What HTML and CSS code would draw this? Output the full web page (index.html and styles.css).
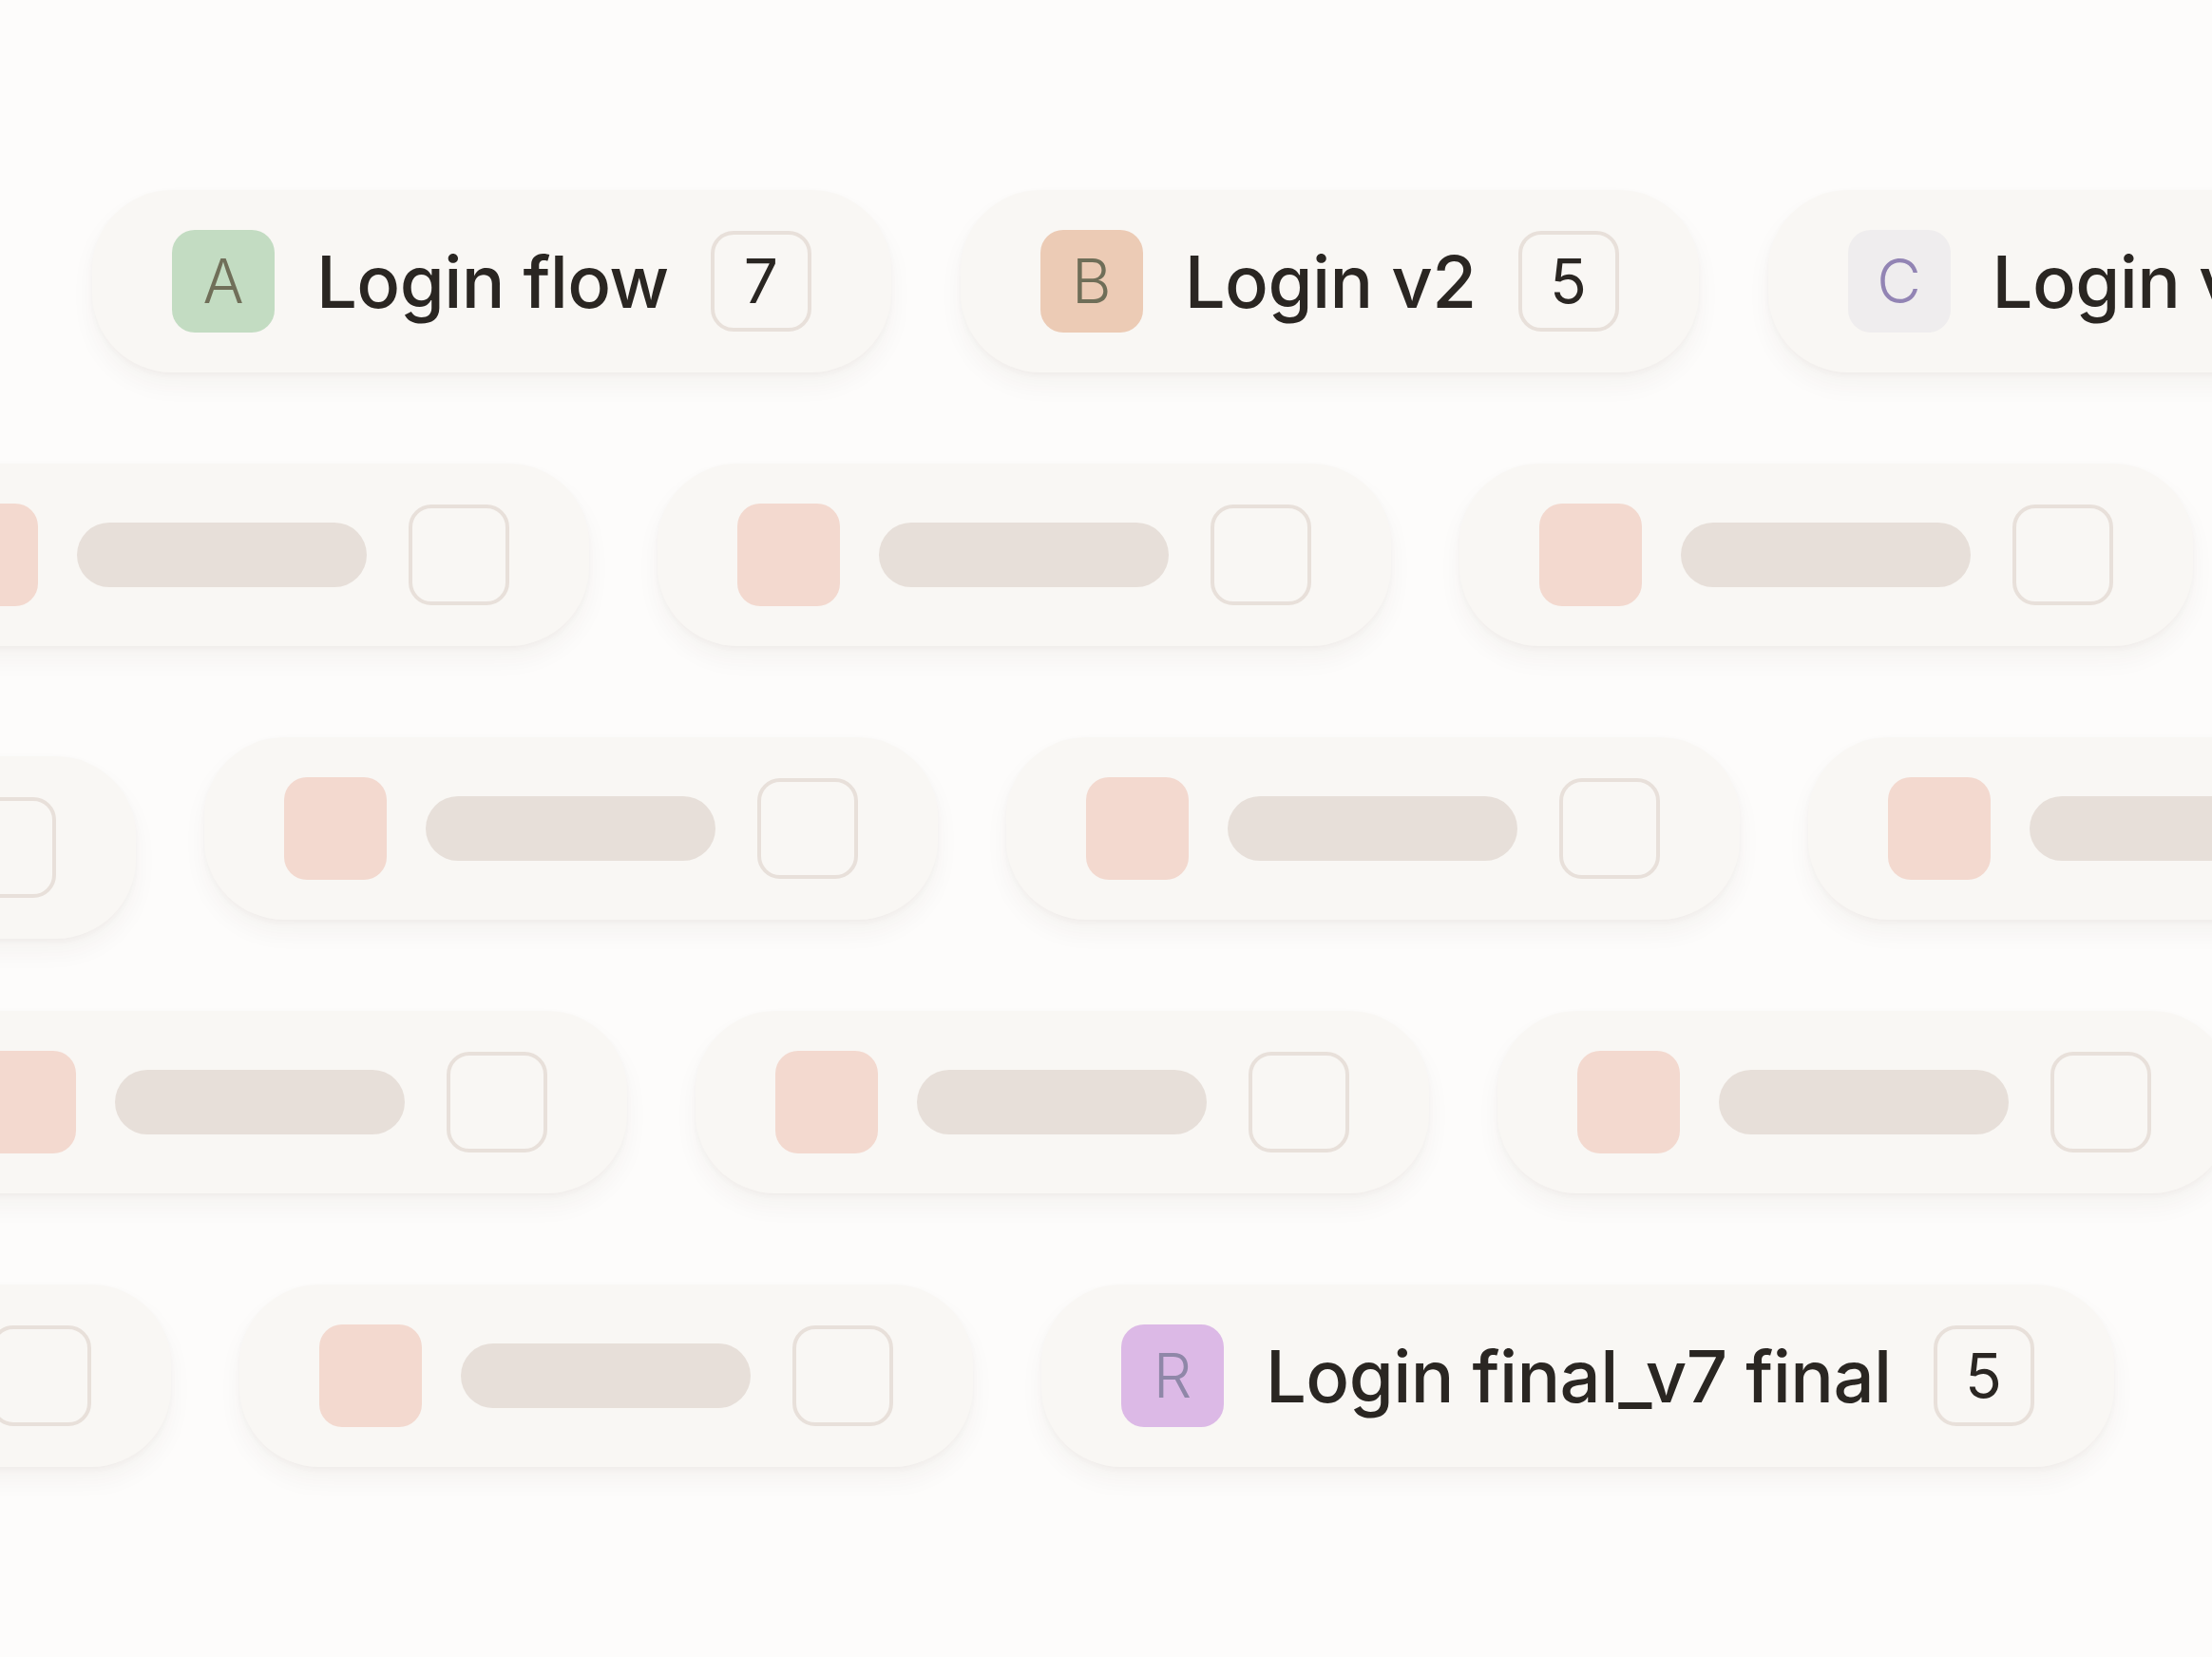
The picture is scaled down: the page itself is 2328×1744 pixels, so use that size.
FILE: index.html
```html
<!DOCTYPE html>
<html lang="en">
<head>
<meta charset="utf-8">
<title>Versions</title>
<link rel="stylesheet" href="styles.css">
</head>
<body>
<div class="canvas">
  <div class="row row-1">
    <div class="pill"><span class="avatar av-a">A</span><span class="label">Login flow</span><span class="count">7</span></div>
    <div class="pill"><span class="avatar av-b">B</span><span class="label">Login v2</span><span class="count">5</span></div>
    <div class="pill"><span class="avatar av-c">C</span><span class="label">Login v3</span><span class="count">4</span></div>
  </div>
  <div class="row row-2">
    <div class="pill"><span class="avatar sk"></span><span class="bar"></span><span class="count"></span></div>
    <div class="pill"><span class="avatar sk"></span><span class="bar"></span><span class="count"></span></div>
    <div class="pill"><span class="avatar sk"></span><span class="bar"></span><span class="count"></span></div>
    <div class="pill"><span class="avatar sk"></span><span class="bar"></span><span class="count"></span></div>
  </div>
  <div class="row row-3">
    <div class="pill drift"><span class="avatar sk"></span><span class="bar"></span><span class="count"></span></div>
    <div class="pill"><span class="avatar sk"></span><span class="bar"></span><span class="count"></span></div>
    <div class="pill"><span class="avatar sk"></span><span class="bar"></span><span class="count"></span></div>
    <div class="pill"><span class="avatar sk"></span><span class="bar"></span><span class="count"></span></div>
  </div>
  <div class="row row-4">
    <div class="pill"><span class="avatar sk"></span><span class="bar"></span><span class="count"></span></div>
    <div class="pill"><span class="avatar sk"></span><span class="bar"></span><span class="count"></span></div>
    <div class="pill"><span class="avatar sk"></span><span class="bar"></span><span class="count"></span></div>
    <div class="pill"><span class="avatar sk"></span><span class="bar"></span><span class="count"></span></div>
  </div>
  <div class="row row-5">
    <div class="pill"><span class="avatar sk"></span><span class="bar"></span><span class="count"></span></div>
    <div class="pill"><span class="avatar sk"></span><span class="bar"></span><span class="count"></span></div>
    <div class="pill"><span class="avatar av-r">R</span><span class="label">Login final_v7 final</span><span class="count">5</span></div>
  </div>
</div>
</body>
</html>
```

FILE: styles.css
```css
html, body {
  margin: 0;
  padding: 0;
  background: #fdfcfb;
}

.canvas {
  width: 2328px;
  height: 1744px;
  overflow: hidden;
  background: #fdfcfb;
  padding-top: 200px;
  box-sizing: border-box;
  display: flex;
  flex-direction: column;
  gap: 96px;
  font-family: Inter, "Noto Sans", sans-serif;
}

.row {
  display: flex;
  gap: 72px;
  align-items: flex-start;
}

.row-1 { margin-left: 97px; gap: 73px; }
.row-2 { margin-left: -152px; }
.row-3 { margin-left: -629px; }
.row-4 { margin-left: -112px; }
.row-5 { margin-left: -592px; }

.pill {
  flex-shrink: 0;
  height: 192px;
  box-sizing: border-box;
  padding: 0 84px;
  display: flex;
  align-items: center;
  gap: 44px;
  background: #f9f7f4;
  border-radius: 84px;
  box-shadow: 0 14px 26px rgba(60, 40, 30, 0.045), 0 3px 6px rgba(60, 40, 30, 0.03);
}

.drift {
  margin-top: 20px;
  margin-bottom: -20px;
}

.avatar {
  flex-shrink: 0;
  width: 108px;
  height: 108px;
  border-radius: 24px;
  display: flex;
  align-items: center;
  justify-content: center;
  font-size: 64px;
  font-weight: 300;
  line-height: 1;
}

.av-a { background: #c3dcc2; color: #706f59; }
.av-b { background: #eccbb5; color: #6f6e58; }
.av-c { background: #efedee; color: #9284b4; }
.av-r { background: #dcb9e6; color: #8f87a8; }
.sk { background: #f3d9cf; }

.label {
  font-size: 76px;
  font-weight: 500;
  color: #2a2622;
  white-space: nowrap;
  line-height: 1;
  letter-spacing: -0.6px;
}

.bar {
  flex-shrink: 0;
  width: 305px;
  height: 68px;
  margin-left: -3px;
  border-radius: 34px;
  background: #e7dfd9;
}

.count {
  flex-shrink: 0;
  width: 106px;
  height: 106px;
  box-sizing: border-box;
  border: 4.5px solid #e8e0da;
  border-radius: 24px;
  display: flex;
  align-items: center;
  justify-content: center;
  font-size: 64px;
  font-weight: 400;
  color: #2a2622;
  line-height: 1;
}
```
